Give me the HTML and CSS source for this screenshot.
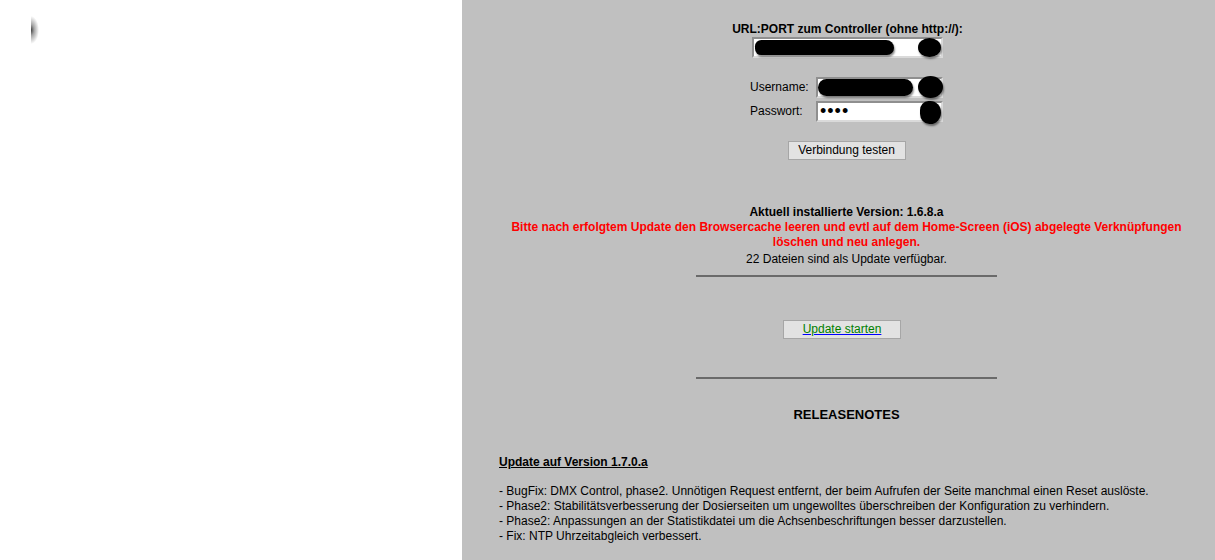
FILE: index.html
```html
<!DOCTYPE html>
<html lang="de">
<head>
<meta charset="utf-8">
<title>Update</title>
<link rel="stylesheet" href="styles.css">
</head>
<body>
<div class="page">
  <aside class="left">
    <div class="shade"></div>
  </aside>
  <main class="right">
    <div class="content">
      <div class="center bold url-label">URL:PORT zum Controller (ohne http://):</div>
      <div class="field-wrap url">
        <input class="field" type="text" value="">
        <span class="blot b-url-1"></span>
        <span class="blot b-url-2"></span>
      </div>
      <table class="login">
        <tr>
          <td class="lbl">Username:</td>
          <td class="cell">
            <div class="field-wrap small">
              <input class="field" type="text" value="">
              <span class="blot b-user-1"></span>
              <span class="blot b-user-2"></span>
            </div>
          </td>
        </tr>
        <tr>
          <td class="lbl">Passwort:</td>
          <td class="cell">
            <div class="field-wrap small">
              <input class="field pw" type="password" value="abcd">
              <span class="blot b-pw"></span>
            </div>
          </td>
        </tr>
      </table>
      <div class="btn-row"><button class="btn test">Verbindung testen</button></div>

      <div class="center bold version">Aktuell installierte Version: 1.6.8.a</div>
      <div class="center bold red">Bitte nach erfolgtem Update den Browsercache leeren und evtl auf dem Home-Screen (iOS) abgelegte Verknüpfungen löschen und neu anlegen.</div>
      <div class="center files">22 Dateien sind als Update verfügbar.</div>
      <div class="rule first"></div>
      <div class="btn-row start-row"><span class="btn start"><a href="#">Update starten</a></span></div>
      <div class="rule second"></div>
      <div class="center bold notes-title">RELEASENOTES</div>

      <div class="notes">
        <div class="bold underline">Update auf Version 1.7.0.a</div>
        <ul class="changes">
          <li>- BugFix: DMX Control, phase2. Unnötigen Request entfernt, der beim Aufrufen der Seite manchmal einen Reset auslöste.</li>
          <li>- Phase2: Stabilitätsverbesserung der Dosierseiten um ungewolltes überschreiben der Konfiguration zu verhindern.</li>
          <li>- Phase2: Anpassungen an der Statistikdatei um die Achsenbeschriftungen besser darzustellen.</li>
          <li>- Fix: NTP Uhrzeitabgleich verbessert.</li>
        </ul>
      </div>
    </div>
  </main>
</div>
</body>
</html>
```
FILE: styles.css
```css
html, body {
  margin: 0;
  padding: 0;
  height: 100%;
  overflow: hidden;
}
body {
  font-family: "Liberation Sans", Arial, sans-serif;
  font-size: 12px;
  line-height: 15px;
  color: #000;
  background: #fff;
}
.page {
  display: flex;
  height: 560px;
}
.left {
  width: 462px;
  flex: none;
  background: #fff;
}
.shade {
  width: 8px;
  height: 28px;
  margin: 16px 0 0 31px;
  background: radial-gradient(ellipse 100% 50% at 0% 50%, rgba(0,0,0,0.75) 0%, rgba(0,0,0,0.35) 40%, rgba(0,0,0,0) 100%);
}
.right {
  flex: 1;
  background: #c0c0c0;
  overflow: hidden;
}
.content {
  width: 695px;
  margin-left: 37px;
  padding-top: 22px;
}
.center { text-align: center; }
.bold { font-weight: bold; }
.underline { text-decoration: underline; }
.url-label { padding-left: 2px; }

.field-wrap {
  position: relative;
}
.field-wrap.url {
  width: 191px;
  height: 21px;
  margin-left: 253px;
}
.field-wrap.small {
  width: 127px;
  height: 21px;
}
.field {
  display: block;
  box-sizing: border-box;
  width: 100%;
  height: 21px;
  margin: 0;
  padding: 0 3px;
  border: 2px solid;
  border-color: #8f8f8f #dadada #dadada #8f8f8f;
  background: #fff;
  font-family: "Liberation Sans", Arial, sans-serif;
  font-size: 12px;
}
.field.pw {
  font-size: 18px;
  letter-spacing: 1px;
  padding-left: 2px;
}
.blot {
  position: absolute;
  background: #000;
  box-shadow: 1px 2px 2px rgba(0,0,0,0.45);
}
.b-url-1 { left: 3px; top: 3px; width: 139px; height: 15px; border-radius: 8px 10px 9px 8px; }
.b-url-2 { left: 166px; top: 1px; width: 23px; height: 19px; border-radius: 50%; }
.b-user-1 { left: 2px; top: 2px; width: 95px; height: 17px; border-radius: 9px; }
.b-user-2 { left: 102px; top: -1px; width: 25px; height: 22px; border-radius: 50%; }
.b-pw { left: 104px; top: 0; width: 21px; height: 23px; border-radius: 40% 50% 50% 45%; }

.login {
  border-collapse: collapse;
  margin: 19px 0 0 251px;
}
.login td {
  padding: 0;
  vertical-align: middle;
}
.login tr + tr td { padding-top: 3px; }
.lbl {
  width: 66px;
  text-align: left;
}

.btn-row {
  text-align: center;
}
.btn {
  display: inline-block;
  box-sizing: border-box;
  height: 19px;
  border: 1px solid #a6a6a6;
  background: #e2e2e2;
  font-family: "Liberation Sans", Arial, sans-serif;
  font-size: 12px;
  line-height: 17px;
  color: #000;
  padding: 0;
  text-align: center;
}
.test {
  width: 118px;
  margin: 19px 0 0 0;
}
.version { margin-top: 45px; }
.red { color: #f00; }
.files { margin-top: 2px; }
.rule {
  width: 301px;
  height: 2px;
  background: #6a6a6a;
  margin: 0 auto;
}
.rule.first { margin-top: 8px; }
.start-row {
  margin-top: 43px;
  line-height: 0;
}
.start {
  width: 118px;
  margin-left: -9px;
  line-height: 17px;
}
.start a {
  color: #008000;
  text-decoration: underline;
  text-decoration-color: #0000ff;
}
.rule.second { margin-top: 38px; }
.notes-title {
  margin-top: 28px;
  font-size: 13px;
}
.notes {
  margin-top: 33px;
}
.changes {
  list-style: none;
  margin: 14px 0 0;
  padding: 0;
}
```
